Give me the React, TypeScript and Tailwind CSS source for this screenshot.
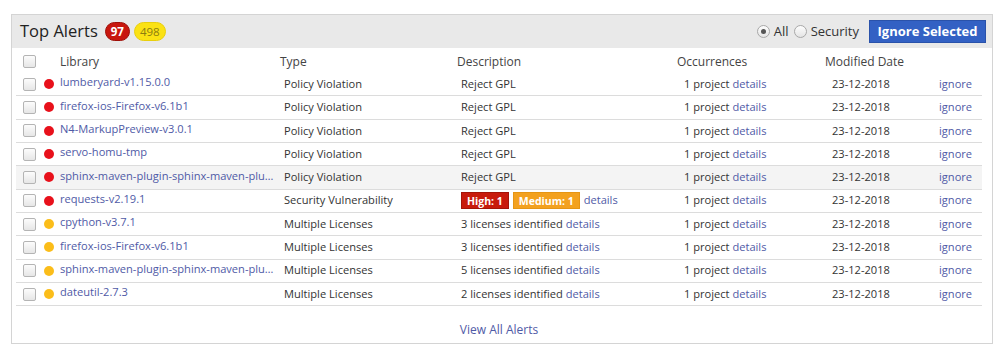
import React from "react";

type Row = {
  name: string;
  level: "red" | "yellow";
  type: string;
  desc: React.ReactNode;
  hover?: boolean;
};

const link = "text-[#4f5aa6]";

const rows: Row[] = [
  { name: "lumberyard-v1.15.0.0", level: "red", type: "Policy Violation", desc: "Reject GPL" },
  { name: "firefox-ios-Firefox-v6.1b1", level: "red", type: "Policy Violation", desc: "Reject GPL" },
  { name: "N4-MarkupPreview-v3.0.1", level: "red", type: "Policy Violation", desc: "Reject GPL" },
  { name: "servo-homu-tmp", level: "red", type: "Policy Violation", desc: "Reject GPL" },
  { name: "sphinx-maven-plugin-sphinx-maven-plugin-2.5.0", level: "red", type: "Policy Violation", desc: "Reject GPL", hover: true },
  {
    name: "requests-v2.19.1",
    level: "red",
    type: "Security Vulnerability",
    desc: (
      <span className="flex items-center">
        <span className="bg-[#c81a0c] text-white text-[10.5px] font-bold px-[5px] h-[17px] leading-[16px] border border-[#a41408]">High: 1</span>
        <span className="ml-[4px] bg-[#f3a11f] text-white text-[10.5px] font-bold px-[5px] h-[17px] leading-[16px] border border-[#e59515]">Medium: 1</span>
        <span className={`ml-[4px] ${link}`}>details</span>
      </span>
    ),
  },
  { name: "cpython-v3.7.1", level: "yellow", type: "Multiple Licenses", desc: <>3 licenses identified <span className={link}>details</span></> },
  { name: "firefox-ios-Firefox-v6.1b1", level: "yellow", type: "Multiple Licenses", desc: <>3 licenses identified <span className={link}>details</span></> },
  { name: "sphinx-maven-plugin-sphinx-maven-plugin-2.5.0", level: "yellow", type: "Multiple Licenses", desc: <>5 licenses identified <span className={link}>details</span></> },
  { name: "dateutil-2.7.3", level: "yellow", type: "Multiple Licenses", desc: <>2 licenses identified <span className={link}>details</span></> },
];

function Check() {
  return <span className="block w-[13px] h-[13px] rounded-[2px] border border-[#b4b4b4] bg-gradient-to-b from-[#fcfcfc] to-[#e6e6e6]" />;
}

function Radio({ on }: { on?: boolean }) {
  return (
    <span className="w-[13px] h-[13px] rounded-full border border-[#a8a8a8] bg-gradient-to-b from-[#fdfdfd] to-[#e4e4e4] flex items-center justify-center">
      {on && <span className="w-[5px] h-[5px] rounded-full bg-[#555]" />}
    </span>
  );
}

export default function App() {
  return (
    <div className="bg-white w-[1003px] h-[350px] pt-[14px] pl-[11px] text-[#333]" style={{ fontFamily: '"Open Sans", "Liberation Sans", sans-serif' }}>
      <div className="w-[982px] border border-[#d4d4d4]">
        {/* header */}
        <div className="h-[33px] bg-[#e9e9e9] flex items-center pl-[8px] pr-[6px]">
          <span className="text-[16.5px] text-[#222]">Top Alerts</span>
          <span className="ml-[7px] h-[19px] px-[5px] rounded-full bg-[#c8160e] border border-[#9e0f08] text-white text-[11.5px] font-bold leading-[17px]">97</span>
          <span className="ml-[4px] h-[19px] px-[5px] rounded-full bg-[#fbe214] border border-[#e9cf0c] text-[#8c7d10] text-[11.5px] leading-[17px]">498</span>
          <div className="ml-auto flex items-center text-[13px] text-[#333]">
            <Radio on />
            <span className="ml-[4px]">All</span>
            <span className="ml-[5px]"><Radio /></span>
            <span className="ml-[4px]">Security</span>
            <button className="ml-[10px] h-[23px] w-[117px] bg-[#3361c4] border border-[#2a52aa] text-white font-bold text-[13px]">Ignore Selected</button>
          </div>
        </div>

        {/* table */}
        <div className="ml-[4px] mr-[10px] text-[11.1px]">
          <div className="h-[25px] flex items-center text-[12px] text-[#444] pt-[2px]">
            <span className="w-[44px] pl-[7px]"><Check /></span>
            <span className="w-[220px]">Library</span>
            <span className="w-[177px]">Type</span>
            <span className="w-[220px]">Description</span>
            <span className="w-[148px]">Occurrences</span>
            <span>Modified Date</span>
          </div>
          {rows.map((r, i) => (
            <div key={i} className={`h-[23.33px] flex items-center border-b border-[#dcdcdc] ${r.hover ? "bg-[#f4f4f4]" : ""}`}>
              <span className="w-[28px] pl-[7px]"><Check /></span>
              <span className="w-[16px]">
                <span className={`block w-[10px] h-[10px] rounded-full ${r.level === "red" ? "bg-[#e8111b]" : "bg-[#fbbd1a]"}`} />
              </span>
              <span className={`w-[220px] pr-[2px] truncate ${link} -mt-[3px]`}>{r.name}</span>
              <span className="w-[177px] pl-[4px]">{r.type}</span>
              <span className="w-[223px] pl-[4px]">{r.desc}</span>
              <span className="w-[147px] pl-[4px]">1 project <span className={link}>details</span></span>
              <span className="w-[108px] pl-[5px]">23-12-2018</span>
              <span className={`pl-[4px] ${link}`}>ignore</span>
            </div>
          ))}
          <div className="h-[37px] flex justify-center pt-[15px] text-[12px]">
            <span className={link}>View All Alerts</span>
          </div>
        </div>
      </div>
    </div>
  );
}
